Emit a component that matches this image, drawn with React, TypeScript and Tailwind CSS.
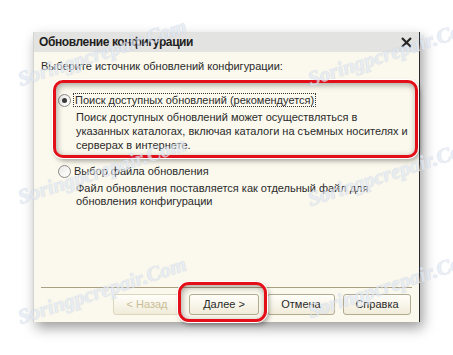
import React from "react";

function Radio({ checked }: { checked?: boolean }) {
  return (
    <span className="flex items-center justify-center w-[13px] h-[13px] rounded-full border border-[#8a8a86] bg-[linear-gradient(135deg,#e9e9e6,#ffffff)] shrink-0">
      {checked && <span className="w-[5px] h-[5px] rounded-full bg-[#3a3a3a]" />}
    </span>
  );
}

function Btn({ label, disabled, w }: { label: string; disabled?: boolean; w: string }) {
  return (
    <div
      className={`${w} h-[21px] flex items-center justify-center rounded-[3px] border ${
        disabled ? "border-[#ddd6bf] text-[#c9bd98]" : "border-[#b3ab90] text-[#2a2a2a]"
      } bg-[linear-gradient(#fffefa,#f1ecd9)] text-[11px]`}
    >
      {label}
    </div>
  );
}

const marks = [
  { l: 22, t: 90 },
  { l: 312, t: 90 },
  { l: 22, t: 208 },
  { l: 312, t: 210 },
  { l: 22, t: 328 },
  { l: 312, t: 322 },
];

export default function App() {
  return (
    <div className="relative w-[453px] h-[355px] bg-white overflow-hidden font-['Liberation_Sans',Arial,sans-serif] text-[11px] text-[#2a2a2a]">
      <div className="pl-[33px] pt-[32px]">
        <div className="flex flex-col w-[387px] h-[290px] bg-[#fbf9ee] border-l border-l-[#d4d4d0] border-r border-r-[#2b2b2b] shadow-[3px_6px_12px_rgba(0,0,0,0.38)]">
          <div className="flex items-center justify-between h-[20px] bg-[#e3e3e1] pl-[5px] pr-[7px]">
            <span className="font-bold text-[12px] tracking-[-0.4px] text-[#1e1e1e] leading-none whitespace-nowrap">
              Обновление конфигурации
            </span>
            <svg width="11" height="11" viewBox="0 0 11 11">
              <path d="M1 1 L10 10 M10 1 L1 10" stroke="#262626" strokeWidth="2.2" />
            </svg>
          </div>
          <div className="flex-1 flex flex-col pt-[7px]">
            <div className="px-[7px] leading-[14px] whitespace-nowrap">Выберите источник обновлений конфигурации:</div>

            <div className="relative mt-[20px] ml-[24px] mr-[7px]">
              <div className="absolute left-[-5px] top-[-13px] right-[-6px] bottom-[-6px] rounded-[10px] border-[3px] border-[#e3101a] shadow-[inset_1px_2px_6px_rgba(0,0,0,0.35),0_0_0_1px_#ffffff,2px_3px_5px_rgba(0,0,0,0.35)] pointer-events-none" />
              <div className="flex items-center gap-[2px] h-[14px]">
                <Radio checked />
                <span className="border border-dotted border-[#333] leading-[12px] px-[1px] whitespace-nowrap">
                  Поиск доступных обновлений (рекомендуется)
                </span>
              </div>
              <div className="ml-[18px] mt-[3px] leading-[14px] whitespace-nowrap">
                Поиск доступных обновлений может осуществляться в
                <br />
                указанных каталогах, включая каталоги на съемных носителях и
                <br />
                серверах в интернете.
              </div>
            </div>

            <div className="mt-[12px] ml-[24px]">
              <div className="flex items-center gap-[3px] h-[14px]">
                <Radio />
                <span className="leading-[14px]">Выбор файла обновления</span>
              </div>
              <div className="ml-[18px] mt-[4px] leading-[13px] whitespace-nowrap">
                Файл обновления поставляется как отдельный файл для
                <br />
                обновления конфигурации
              </div>
            </div>

            <div className="flex-1" />
            <div className="mx-[7px] border-t border-t-[#aa9f82]" />
            <div className="flex justify-end gap-[8px] pr-[8px] pt-[6px] pb-[7px]">
              <Btn label="< Назад" disabled w="w-[68px]" />
              <div className="relative">
                <div className="absolute left-[-11px] top-[-12px] right-[-8px] bottom-[-7px] rounded-[11px] border-[3px] border-[#e3101a] shadow-[inset_1px_2px_6px_rgba(0,0,0,0.35),0_0_0_1px_#ffffff,2px_3px_5px_rgba(0,0,0,0.35)] pointer-events-none" />
                <Btn label="Далее >" w="w-[70px]" />
              </div>
              <Btn label="Отмена" w="w-[68px]" />
              <Btn label="Справка" w="w-[68px]" />
            </div>
          </div>
        </div>
      </div>

      {marks.map((m, i) => (
        <span
          key={i}
          className="absolute origin-bottom-left -rotate-[18deg] whitespace-nowrap font-['Liberation_Serif',serif] italic font-bold text-[21px] leading-none text-[#e2e8f3] opacity-70 [text-shadow:0_0_1px_#aab7cf] pointer-events-none"
          style={{ left: m.l, top: m.t - 21 }}
        >
          Soringpcrepair.Com
        </span>
      ))}
    </div>
  );
}
